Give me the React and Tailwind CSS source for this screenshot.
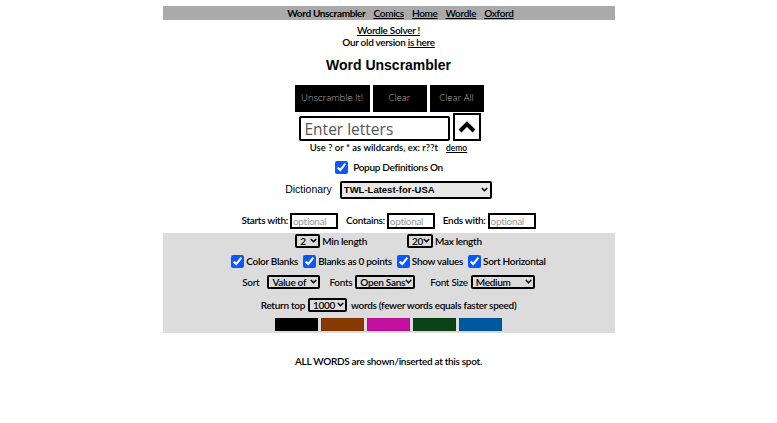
import { useState } from "react";

const colours = ["bg-[#000000]", "bg-[#883a00]", "bg-[#c4109f]", "bg-[#0a4416]", "bg-[#0058a0]"];

function Sel({ className, value }) {
  return (
    <div className={"relative h-[14px] " + className}>
      <select className="appearance-none w-full h-full border-2 border-black rounded-[2px] text-[10px] leading-[10px] pl-[3px] pr-[7px] font-semibold">
        <option>{value}</option>
      </select>
      <svg className="absolute right-[3px] top-[4px] pointer-events-none" width="7" height="5" viewBox="0 0 7 5">
        <path d="M0.8 1 L3.5 3.7 L6.2 1" fill="none" stroke="black" strokeWidth="1.6" />
      </svg>
    </div>
  );
}

function Check({ label, className }) {
  return (
    <label className={"flex items-center gap-[2px] " + (className || "")}>
      <input type="checkbox" defaultChecked className="w-[13px] h-[13px] m-0 accent-[#0b57ff]" />
      <span>{label}</span>
    </label>
  );
}

export default function App() {
  const [letters, setLetters] = useState("");

  return (
    <div className="w-[452px] mx-auto pt-[6px] text-[10px] tracking-[-0.3px] text-black font-['Lato',sans-serif] font-semibold">
      <nav className="h-[14px] bg-[#aaaaaa] flex justify-center items-center gap-[8px] pl-[24px] leading-none">
        <span className="font-bold tracking-[-0.35px]">Word Unscrambler</span>
        <a className="underline">Comics</a>
        <a className="underline">Home</a>
        <a className="underline">Wordle</a>
        <a className="underline">Oxford</a>
      </nav>

      <div className="flex flex-col items-center mt-[4px] leading-[12px]">
        <a className="underline">Wordle Solver !</a>
        <div>
          Our old version <a className="underline">is here</a>
        </div>
      </div>

      <h1 className="text-center font-['Liberation_Sans',sans-serif] font-bold text-[14px] tracking-normal mt-[9px] leading-[16px]">
        Word Unscrambler
      </h1>

      <div className="flex justify-center gap-[3px] mt-[12px] ml-[1px] tracking-normal">
        <button className="w-[75px] h-[27px] bg-black text-[#b0b0b0] text-[9.5px] font-['Open_Sans',sans-serif] font-light">Unscramble It!</button>
        <button className="w-[54px] h-[27px] bg-black text-[#b0b0b0] text-[9.5px] font-['Open_Sans',sans-serif] font-light">Clear</button>
        <button className="w-[54px] h-[27px] bg-black text-[#b0b0b0] text-[9.5px] font-['Open_Sans',sans-serif] font-light">Clear All</button>
      </div>

      <div className="flex justify-center items-end gap-[3px] mt-[1px] ml-[2px]">
        <input
          value={letters}
          onChange={(e) => setLetters(e.target.value)}
          placeholder="Enter letters"
          className="w-[151px] h-[25px] border-2 border-black rounded-[2px] px-[4px] text-[15.5px] tracking-normal leading-none font-normal font-['Open_Sans',sans-serif] placeholder:text-[#555]"
        />
        <button className="w-[28px] h-[28px] border-2 border-black flex items-center justify-center">
          <svg width="18" height="12" viewBox="0 0 18 12">
            <path d="M2 10 L9 3 L16 10" fill="none" stroke="black" strokeWidth="4" />
          </svg>
        </button>
      </div>

      <div className="flex justify-center items-center mt-[1px] h-[12px] text-[9.5px] tracking-normal">
        <span>Use ? or * as wildcards, ex: r??t</span>
        <a className="underline ml-[8px] text-[8.5px]">demo</a>
      </div>

      <div className="flex justify-center mt-[6px] h-[14px] ml-[1px]">
        <Check label="Popup Definitions On" className="gap-[5px]" />
      </div>

      <div className="flex justify-center items-center gap-[8px] mt-[7px]">
        <span className="font-['Liberation_Sans',sans-serif] font-normal tracking-normal text-[10.5px]">Dictionary</span>
        <div className="relative w-[152px] h-[18px]">
          <select className="appearance-none w-full h-full border-2 border-black rounded-[2px] bg-[#e8e8e8] text-[9.5px] tracking-normal font-bold font-['Liberation_Sans',sans-serif] pl-[2px]">
            <option>TWL-Latest-for-USA</option>
          </select>
          <svg className="absolute right-[4px] top-[6px] pointer-events-none" width="7" height="5" viewBox="0 0 7 5">
            <path d="M0.8 1 L3.5 3.7 L6.2 1" fill="none" stroke="black" strokeWidth="1.6" />
          </svg>
        </div>
      </div>

      <div className="flex justify-center items-center mt-[13px] h-[17px]">
        <span>Starts with:</span>
        <input placeholder="optional" className="ml-[2px] w-[48px] h-[16px] border-2 border-black px-[1px] text-[10px] font-normal placeholder:text-[#999]" />
        <span className="ml-[8px]">Contains:</span>
        <input placeholder="optional" className="ml-[2px] w-[48px] h-[16px] border-2 border-black px-[1px] text-[10px] font-normal placeholder:text-[#999]" />
        <span className="ml-[8px]">Ends with:</span>
        <input placeholder="optional" className="ml-[2px] w-[48px] h-[16px] border-2 border-black px-[1px] text-[10px] font-normal placeholder:text-[#999]" />
      </div>

      <div className="mt-[4px] bg-[#dcdcdc] pt-[1px] pb-[2px] flex flex-col items-center">
        <div className="flex items-center h-[14px]">
          <Sel className="w-[25px]" value="2" />
          <span className="ml-[2px]">Min length</span>
          <Sel className="w-[26px] ml-[40px]" value="20" />
          <span className="ml-[2px]">Max length</span>
        </div>

        <div className="flex items-center gap-[5px] mt-[6px] h-[14px]">
          <Check label="Color Blanks" />
          <Check label="Blanks as 0 points" />
          <Check label="Show values" />
          <Check label="Sort Horizontal" />
        </div>

        <div className="flex items-center mt-[7px] h-[14px] font-medium">
          <span>Sort</span>
          <Sel className="w-[53px] ml-[8px]" value="Value of" />
          <span className="ml-[9px]">Fonts</span>
          <Sel className="w-[60px] ml-[3px]" value="Open Sans" />
          <span className="ml-[15px]">Font Size</span>
          <Sel className="w-[64px] ml-[3px]" value="Medium" />
        </div>

        <div className="flex items-center mt-[9px] h-[14px]">
          <span>Return top</span>
          <Sel className="w-[39px] ml-[3px]" value="1000" />
          <span className="ml-[4px]">words (fewer words equals faster speed)</span>
        </div>

        <div className="flex gap-[3px] mt-[6px]">
          {colours.map((c) => (
            <div key={c} className={"w-[43px] h-[13px] border border-[#0000001a] " + c} />
          ))}
        </div>
      </div>

      <p className="text-center mt-[21px]">ALL WORDS are shown/inserted at this spot.</p>
    </div>
  );
}
